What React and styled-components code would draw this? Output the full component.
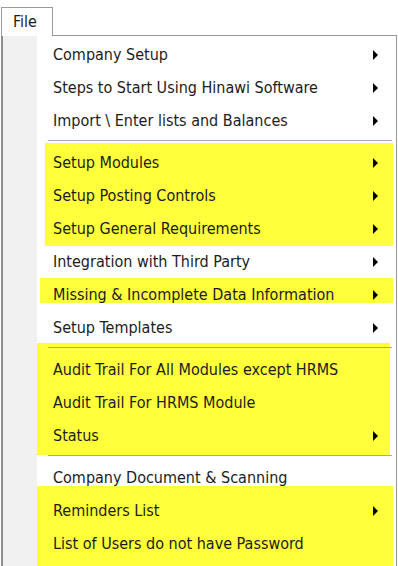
import styled, { createGlobalStyle } from 'styled-components';

const GlobalStyle = createGlobalStyle`
  html, body {
    margin: 0;
    background: #fff;
    overflow: hidden;
  }
  body {
    font-family: "DejaVu Sans Condensed", "DejaVu Sans", sans-serif;
    font-stretch: condensed;
    font-size: 16px;
    color: #1c1c1c;
  }
`;

const Screen = styled.div`
  padding: 7px 0 0 1px;
`;

const MenuBar = styled.div`
  display: flex;
`;

const Tab = styled.div`
  position: relative;
  z-index: 1;
  box-sizing: border-box;
  width: 52px;
  height: 29px;
  margin-bottom: -1px;
  padding: 4px 0 0 11px;
  border: 1px solid #9a9a9a;
  border-bottom: none;
  background: #fff;
`;

// gutter on the left like the old windows menus
const Menu = styled.div`
  position: relative;
  z-index: 0;
  box-sizing: border-box;
  width: 396px;
  padding: 2px 0 8px;
  border: 1px solid #979797;
  border-left: 2px solid #8e8e8e;
  border-bottom: none;
  background: linear-gradient(to right, #f1f1f1 34px, #fff 34px);
`;

const Row = styled.div`
  height: 33px;
  display: flex;
  align-items: center;
  justify-content: space-between;
  padding: 0 18px 0 50px;
  white-space: nowrap;
`;

const Arrow = styled.span`
  width: 0;
  height: 0;
  border-left: 5px solid #000;
  border-top: 5px solid transparent;
  border-bottom: 5px solid transparent;
`;

const Separator = styled.div`
  height: 9px;
  display: flex;
  align-items: center;
  padding: 0 4px 0 45px;

  &::after {
    content: "";
    flex: 1;
    height: 1px;
    border-top: 1px solid #a8a8a8;
    border-bottom: 1px solid #fff;
  }
`;

// yellow highlighter mark drawn over the screenshot
const Mark = styled.div`
  position: relative;

  &::before {
    content: "";
    position: absolute;
    z-index: -1;
    top: ${p => p.$t}px;
    bottom: ${p => p.$b}px;
    left: ${p => p.$l}px;
    right: ${p => p.$r}px;
    background: #ffff3c;
  }
`;

const Item = ({ label, sub }) => (
  <Row>
    <span>{label}</span>
    {sub && <Arrow />}
  </Row>
);

const App = () => {
  return (
    <Screen>
      <GlobalStyle />
      <MenuBar>
        <Tab>File</Tab>
      </MenuBar>
      <Menu>
        <Item label="Company Setup" sub />
        <Item label="Steps to Start Using Hinawi Software" sub />
        <Item label="Import \ Enter lists and Balances" sub />
        <Separator />
        <Mark $t={-3} $b={-1} $l={42} $r={3}>
          <Item label="Setup Modules" sub />
          <Item label="Setup Posting Controls" sub />
          <Item label="Setup General Requirements" sub />
        </Mark>
        <Item label="Integration with Third Party" sub />
        <Mark $t={0} $b={8} $l={37} $r={3}>
          <Item label="Missing & Incomplete Data Information" sub />
        </Mark>
        <Item label="Setup Templates" sub />
        <Mark $t={-1} $b={-3} $l={34} $r={6}>
          <Separator />
          <Item label="Audit Trail For All Modules except HRMS" />
          <Item label="Audit Trail For HRMS Module" />
          <Item label="Status" sub />
        </Mark>
        <Separator />
        <Item label="Company Document & Scanning" />
        <Mark $t={-8} $b={-10} $l={34} $r={3}>
          <Item label="Reminders List" sub />
          <Item label="List of Users do not have Password" />
        </Mark>
      </Menu>
    </Screen>
  );
};

export default App;
